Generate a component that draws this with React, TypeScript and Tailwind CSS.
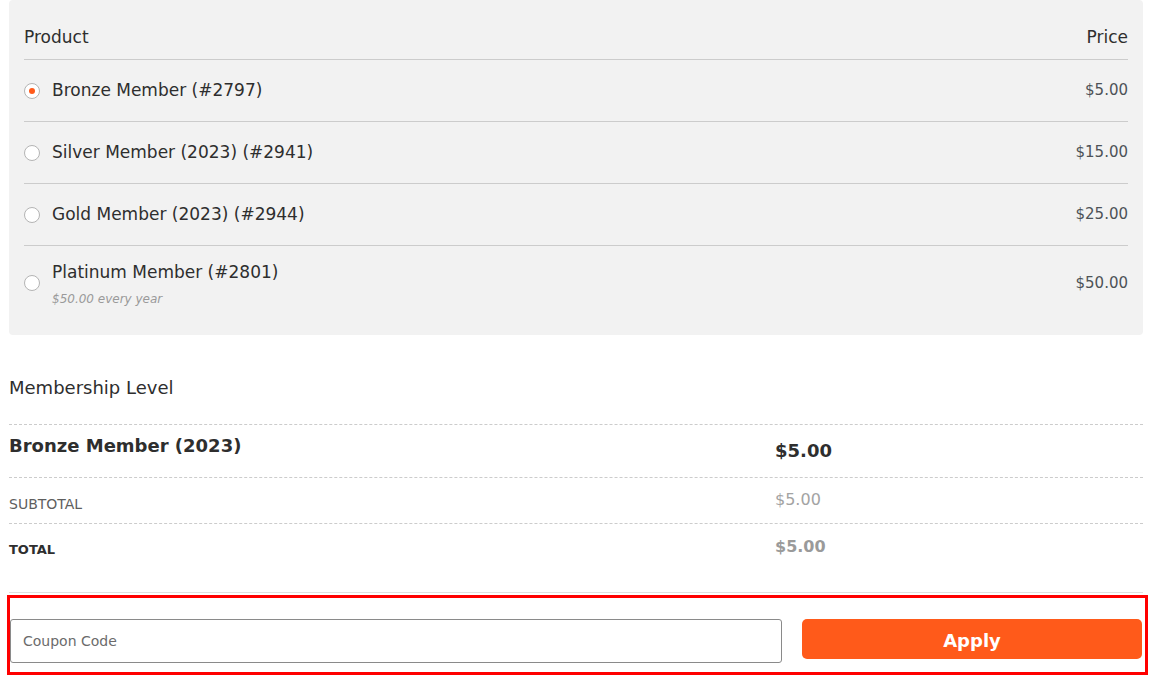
const products = [
  { id: "bronze", name: "Bronze Member (#2797)", price: "$5.00", checked: true },
  { id: "silver", name: "Silver Member (2023) (#2941)", price: "$15.00" },
  { id: "gold", name: "Gold Member (2023) (#2944)", price: "$25.00" },
];

const Radio = ({ checked }: { checked?: boolean }) => (
  <span className="flex h-4 w-4 shrink-0 items-center justify-center rounded-full border border-[#b4b4b4] bg-white">
    {checked && <span className="h-[6px] w-[6px] rounded-full bg-[#ff5a1a]" />}
  </span>
);

export default function App() {
  return (
    <div className="h-[685px] w-[1171px] overflow-hidden bg-white pl-[9px] pr-[28px] font-['DejaVu_Sans',sans-serif] text-[#2e2e2e]">
      {/* product picker */}
      <div className="rounded-[4px] bg-[#f2f2f2] px-[15px] pb-[15px]">
        <div className="flex h-[60px] items-center justify-between border-b border-[#cccccc] pt-[16px] text-[17px]">
          <span>Product</span>
          <span>Price</span>
        </div>

        {products.map((p) => (
          <div
            key={p.id}
            className="flex h-[62px] items-center justify-between border-b border-[#cccccc]"
          >
            <div className="flex items-center gap-3">
              <Radio checked={p.checked} />
              <span className="text-[17px]">{p.name}</span>
            </div>
            <span className="text-[15px] text-[#4d5257]">{p.price}</span>
          </div>
        ))}

        <div className="flex h-[74px] items-center justify-between">
          <div className="flex items-center gap-3">
            <Radio />
            <div className="flex flex-col">
              <span className="text-[17px] leading-[24px]">Platinum Member (#2801)</span>
              <span className="mt-[7px] text-[12px] leading-[16px] text-[#9a9a9a] italic">
                $50.00 every year
              </span>
            </div>
          </div>
          <span className="text-[15px] text-[#4d5257]">$50.00</span>
        </div>
      </div>

      {/* order summary */}
      <h3 className="mt-[41px] text-[18px] leading-[24px]">Membership Level</h3>

      <div className="mt-[24px] border-t border-dashed border-[#cccccc]">
        <div className="grid h-[53px] grid-cols-[766px_1fr] border-b border-dashed border-[#cccccc]">
          <span className="pt-[8px] text-[18px] leading-[26px] font-bold">Bronze Member (2023)</span>
          <span className="pt-[13px] text-[18px] leading-[26px] font-bold">$5.00</span>
        </div>
        <div className="grid h-[46px] grid-cols-[766px_1fr] border-b border-dashed border-[#cccccc]">
          <span className="pt-[16px] text-[14px] leading-[20px] text-[#5e5e5e]">SUBTOTAL</span>
          <span className="pt-[11px] text-[16px] leading-[22px] text-[#a3a3a3]">$5.00</span>
        </div>
        <div className="grid h-[69px] grid-cols-[766px_1fr] border-b border-[#e0e0e0]">
          <span className="pt-[16px] text-[13px] leading-[20px] font-bold">TOTAL</span>
          <span className="pt-[12px] text-[16px] leading-[22px] font-bold text-[#9a9a9a]">$5.00</span>
        </div>
      </div>

      {/* coupon */}
      <div className="-ml-[2px] -mr-[5px] mt-[2px] flex items-start gap-5 border-[3px] border-[#ff0000] pt-[21px] pb-[9px] pr-[3px]">
        <input
          type="text"
          placeholder="Coupon Code"
          className="h-[44px] w-[772px] rounded-[3px] border border-[#8a8a8a] bg-white px-[12px] text-[14px] text-[#333] placeholder:text-[#6b6b6b] focus:outline-none"
        />
        <button
          type="button"
          className="h-[40px] flex-1 rounded-[5px] bg-[#ff5a1a] pt-[2px] text-[18px] font-bold text-white"
        >
          Apply
        </button>
      </div>
    </div>
  );
}
